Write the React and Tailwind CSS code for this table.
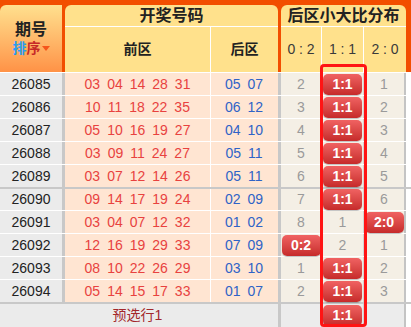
import React from 'react';

const rows = [
  ['26085', ['03', '04', '14', '28', '31'], ['05', '07'], [2, null, 1], 1],
  ['26086', ['10', '11', '18', '22', '35'], ['06', '12'], [3, null, 2], 1],
  ['26087', ['05', '10', '16', '19', '27'], ['04', '10'], [4, null, 3], 1],
  ['26088', ['03', '09', '11', '24', '27'], ['05', '11'], [5, null, 4], 1],
  ['26089', ['03', '07', '12', '14', '26'], ['05', '11'], [6, null, 5], 1],
  ['26090', ['09', '14', '17', '19', '24'], ['02', '09'], [7, null, 6], 1],
  ['26091', ['03', '04', '07', '12', '32'], ['01', '02'], [8, 1, null], 2],
  ['26092', ['12', '16', '19', '29', '33'], ['07', '09'], [null, 2, 1], 0],
  ['26093', ['08', '10', '22', '26', '29'], ['03', '10'], [1, null, 2], 1],
  ['26094', ['05', '14', '15', '17', '33'], ['01', '07'], [2, null, 3], 1],
];

const labels = ['0:2', '1:1', '2:0'];
const distW = ['w-[41px] border-r border-r-[#d2d2d2]', 'w-[42px] border-r border-r-[#d2d2d2]', 'w-[42px] border-r-2 border-r-[#c4c4c4]'];

function Pill({ children }) {
  return (
    <span className="flex h-[21px] w-[39px] items-center justify-center rounded-[5px] bg-gradient-to-b from-[#f06262] to-[#c62a2a] text-[14px] font-bold text-white shadow-[0_1px_1px_rgba(0,0,0,0.25)]">
      {children}
    </span>
  );
}

export default function App() {
  return (
    <div className="relative h-[327px] w-[411px] overflow-hidden bg-white font-['Liberation_Sans','Noto_Sans_CJK_SC',sans-serif]">
      {/* header */}
      <div className="flex h-[72px] bg-[#f24e00] pt-[5px] text-[#222]">
        <div className="flex w-[62px] flex-col items-center justify-center rounded-tl-[6px] bg-gradient-to-b from-[#ffe08e] to-[#ff9246]">
          <div className="text-[16px] font-bold leading-[20px]">期号</div>
          <div className="flex items-center text-[14px] font-bold leading-[17px]">
            <span className="text-[#2a9cf0]">排</span>
            <span className="text-[#c62828]">序</span>
            <span className="ml-[1px] h-0 w-0 border-x-[4px] border-t-[5px] border-x-transparent border-t-[#f5561c]" />
          </div>
        </div>
        <div className="ml-[3px] flex w-[213px] flex-col rounded-t-[6px] bg-[#ffe18c]">
          <div className="flex h-[22px] items-center justify-center border-b border-white text-[16px] font-bold">开奖号码</div>
          <div className="flex flex-1 text-[14px] font-bold">
            <div className="flex w-[146px] items-center justify-center border-r border-white">前区</div>
            <div className="flex flex-1 items-center justify-center">后区</div>
          </div>
        </div>
        <div className="ml-[3px] flex w-[125px] flex-col rounded-t-[6px] bg-[#ffe18c]">
          <div className="flex h-[22px] items-center justify-center border-b border-white text-[16px] font-bold">后区小大比分布</div>
          <div className="flex flex-1 text-[14px] text-[#3a3a3a]">
            <div className="flex w-[41px] items-center justify-center border-r border-white">0 : 2</div>
            <div className="flex w-[42px] items-center justify-center border-r border-white">1 : 1</div>
            <div className="flex flex-1 items-center justify-center">2 : 0</div>
          </div>
        </div>
      </div>

      {/* rows */}
      {rows.map(([issue, front, back, dist, hit], i) => (
        <div
          key={issue}
          className={`flex h-[23px] text-[14px] ${i === 5 ? 'border-t-2 border-t-[#c8c8c8]' : 'border-t border-t-white'}`}
        >
          <div className="flex w-[65px] items-center justify-center border-r-[3px] border-r-[#c8c8c8] bg-[#ebebeb] text-[#222]">{issue}</div>
          <div className="flex w-[146px] items-center justify-center gap-[7px] border-r border-r-white bg-[#ffe5d2] text-[#e8423f]">
            {front.map((n, k) => <span key={k}>{n}</span>)}
          </div>
          <div className="flex w-[70px] items-center justify-center gap-[7px] border-r-[3px] border-r-[#c8c8c8] bg-[#ffe5d2] pr-[1px] text-[#2f63c7]">
            {back.map((n, k) => <span key={k}>{n}</span>)}
          </div>
          {dist.map((v, k) => (
            <div key={k} className={`flex items-center justify-center bg-[#f4efe5] text-[#9a9a9a] ${distW[k]}`}>
              {k === hit ? <Pill>{labels[k]}</Pill> : v}
            </div>
          ))}
          <div className="flex-1 bg-white" />
        </div>
      ))}

      {/* footer */}
      <div className="flex h-[25px] border-t-2 border-t-[#c8c8c8] text-[14px]">
        <div className="flex w-[281px] items-center justify-center border-r-[3px] border-r-[#c8c8c8] bg-[#ebebeb] pr-[3px] text-[#a3282b]">预选行1</div>
        <div className={`bg-[#ececec] ${distW[0]}`} />
        <div className={`flex items-center justify-center bg-[#ececec] ${distW[1]}`}>
          <Pill>1:1</Pill>
        </div>
        <div className={`bg-[#ececec] ${distW[2]}`} />
        <div className="flex-1 bg-white" />
      </div>

      {/* highlight box on 1:1 column */}
      <div className="pointer-events-none absolute left-[320px] top-[64px] h-[263px] w-[47px] rounded-[4px] border-[3px] border-[#ff1414]" />
    </div>
  );
}
